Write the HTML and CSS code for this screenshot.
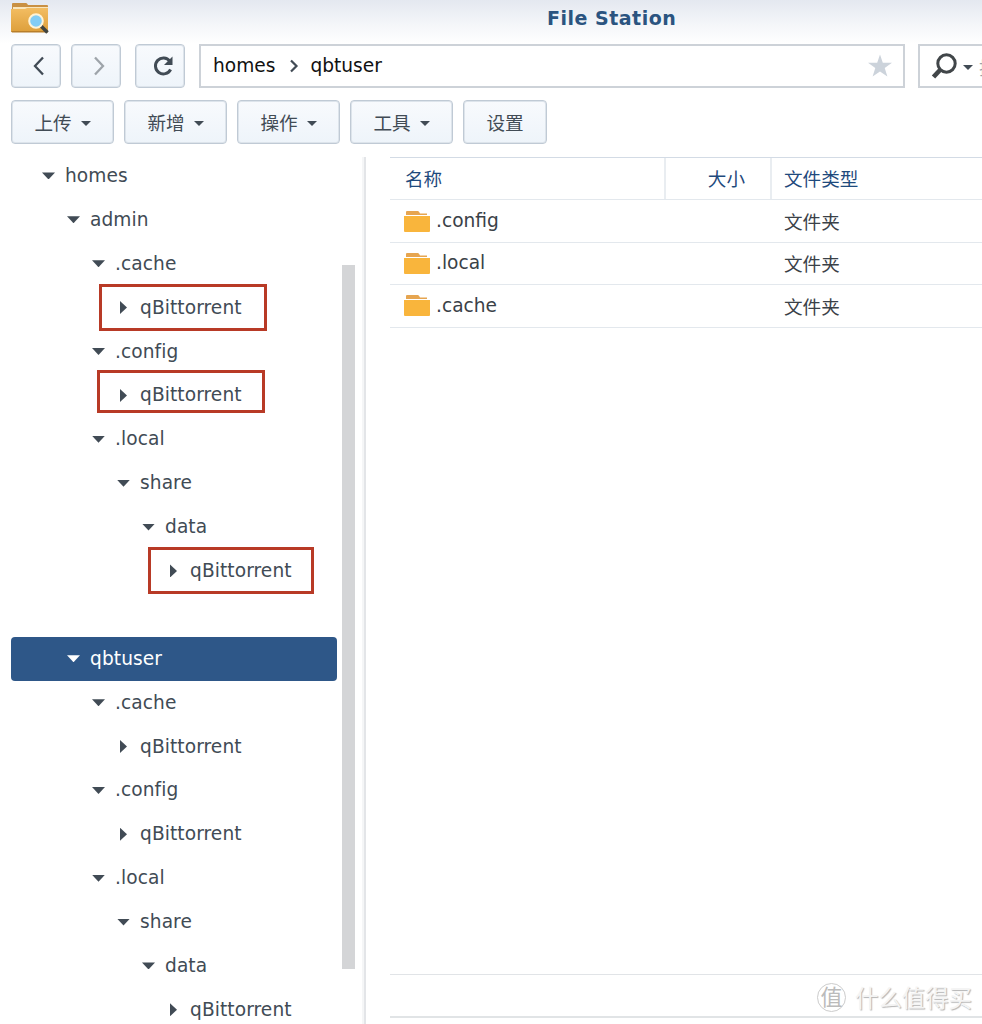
FILE: index.html
```html
<!DOCTYPE html>
<html lang="zh-CN">
<head>
    <meta charset="UTF-8">
    <meta name="viewport" content="width=device-width, initial-scale=1.0">
    <title>File Station</title>
    <link rel="stylesheet" href="styles.css">
</head>
<body>
    <div class="window">
        <header class="titlebar">
            <svg class="app-icon" width="40" height="34" viewBox="0 0 40 34">
                <defs>
                    <linearGradient id="folder" x1="0" y1="0" x2="0" y2="1">
                        <stop offset="0" stop-color="#f3bd62"/>
                        <stop offset="1" stop-color="#dd9f3b"/>
                    </linearGradient>
                </defs>
                <path d="M1 4q0-1 1-1h13q1 0 2 2h19q1 0 1 1v6H1z" fill="#c99043"/>
                <path d="M2 7h35v4H2z" fill="#f9e6bd"/>
                <path d="M0 9h14l2-1h21v23q0 1-1 1H1q-1 0-1-1z" fill="url(#folder)"/>
                <path d="M0 31h37v1.500H1z" fill="#b87e2a"/>
                <path d="M30 26l6.500 6.500" stroke="#3f4441" stroke-width="3.500"/>
                <circle cx="25" cy="21" r="6.800" fill="#83cdf5" stroke="#fff3d6" stroke-width="2"/>
            </svg>
            <h1>File Station</h1>
        </header>

        <nav class="navbar">
            <button class="btn nav-btn" aria-label="后退">
                <svg width="24" height="24" viewBox="0 0 24 24"><path d="M16 3.500L8 12l8 8.500" fill="none" stroke="#414b55" stroke-width="2.300"/></svg>
            </button>
            <button class="btn nav-btn" aria-label="前进">
                <svg width="24" height="24" viewBox="0 0 24 24"><path d="M8 3.500l8 8.500-8 8.500" fill="none" stroke="#9ea4aa" stroke-width="2.300"/></svg>
            </button>
            <button class="btn nav-btn reload" aria-label="刷新">
                <svg width="24" height="24" viewBox="0 0 24 24"><path d="M18.800 7A8 8 0 1 0 19.600 15.500" fill="none" stroke="#414b55" stroke-width="3"/><path d="M21.500 2.500v8.500H13l3-3z" fill="#414b55"/></svg>
            </button>
            <div class="path">
                <span>homes</span>
                <svg class="sep" width="10" height="14" viewBox="0 0 10 14"><path d="M2 1.500L7.500 7 2 12.500" fill="none" stroke="#414b55" stroke-width="2.200"/></svg>
                <span>qbtuser</span>
                <svg class="star" width="24" height="24" viewBox="0 0 24 24"><path d="M12 .500l2.800 8.300H24l-7.300 5.300 2.700 8.400-7.400-5-7.400 5 2.700-8.400L0 8.800h9.200z" fill="#ccd3db"/></svg>
            </div>
            <div class="search">
                <svg width="26" height="26" viewBox="0 0 26 26"><circle cx="15.500" cy="10.500" r="8.700" fill="none" stroke="#414649" stroke-width="3"/><path d="M9 17l-6.500 7" stroke="#414649" stroke-width="4.600"/></svg>
                <i class="caret"></i>
                <span class="placeholder">搜索</span>
            </div>
        </nav>

        <div class="toolbar">
            <button class="btn">上传<i class="caret"></i></button>
            <button class="btn">新增<i class="caret"></i></button>
            <button class="btn">操作<i class="caret"></i></button>
            <button class="btn">工具<i class="caret"></i></button>
            <button class="btn plain">设置</button>
        </div>

        <main class="content">
            <ul class="tree">
                <li class="lv0 open">homes</li>
                <li class="lv1 open">admin</li>
                <li class="lv2 open">.cache</li>
                <li class="lv3">qBittorrent<b class="mark mark-cache"></b></li>
                <li class="lv2 open">.config</li>
                <li class="lv3">qBittorrent<b class="mark mark-config"></b></li>
                <li class="lv2 open">.local</li>
                <li class="lv3 open">share</li>
                <li class="lv4 open">data</li>
                <li class="lv5">qBittorrent<b class="mark mark-data"></b></li>
                <li class="blank"></li>
                <li class="lv1 open selected">qbtuser</li>
                <li class="lv2 open">.cache</li>
                <li class="lv3">qBittorrent</li>
                <li class="lv2 open">.config</li>
                <li class="lv3">qBittorrent</li>
                <li class="lv2 open">.local</li>
                <li class="lv3 open">share</li>
                <li class="lv4 open">data</li>
                <li class="lv5">qBittorrent</li>
            </ul>
            <div class="scrollbar"></div>
            <div class="splitter"></div>

            <section class="files">
                <div class="row head">
                    <div>名称</div>
                    <div class="size">大小</div>
                    <div>文件类型</div>
                </div>
                <div class="row">
                    <div class="name"><svg width="26" height="23" viewBox="0 0 26 23"><path d="M2 5V2q0-1 1-1h11q1 0 2 2.500h7V5z" fill="#e6a550"/><path d="M0 6h26v15q0 1-1 1H1q-1 0-1-1z" fill="#f9b53c"/></svg>.config</div>
                    <div></div>
                    <div>文件夹</div>
                </div>
                <div class="row">
                    <div class="name"><svg width="26" height="23" viewBox="0 0 26 23"><path d="M2 5V2q0-1 1-1h11q1 0 2 2.500h7V5z" fill="#e6a550"/><path d="M0 6h26v15q0 1-1 1H1q-1 0-1-1z" fill="#f9b53c"/></svg>.local</div>
                    <div></div>
                    <div>文件夹</div>
                </div>
                <div class="row">
                    <div class="name"><svg width="26" height="23" viewBox="0 0 26 23"><path d="M2 5V2q0-1 1-1h11q1 0 2 2.500h7V5z" fill="#e6a550"/><path d="M0 6h26v15q0 1-1 1H1q-1 0-1-1z" fill="#f9b53c"/></svg>.cache</div>
                    <div></div>
                    <div>文件夹</div>
                </div>
                <footer class="statusbar"></footer>
            </section>
        </main>

        <div class="watermark"><span class="seal">值</span>什么值得买</div>
    </div>
</body>
</html>
```

FILE: styles.css
```css
* {
    box-sizing: border-box;
}

body {
    margin: 0;
    font-family: "DejaVu Sans", "Noto Sans CJK SC", sans-serif;
    font-size: 18.6px;
    color: #414b55;
    background: #fff;
}

.window {
    position: relative;
    display: flex;
    flex-direction: column;
    width: 982px;
    height: 1024px;
    overflow: hidden;
}

/* title */
.titlebar {
    display: flex;
    height: 44px;
    padding-left: 11px;
    background: linear-gradient(#e4e8f0, #f4f6f9 55%, #fff);
}

.titlebar h1 {
    margin: 0 0 0 496px;
    font-size: 19px;
    line-height: 37px;
    letter-spacing: 0.5px;
    color: #2b5480;
}

/* buttons */
.btn {
    display: flex;
    align-items: center;
    justify-content: center;
    height: 44px;
    padding: 0;
    font-family: inherit;
    font-size: 18.6px;
    color: #414b55;
    background: linear-gradient(#f8fafd, #eef4fa);
    border: 1px solid #c0cad5;
    border-radius: 4px;
    box-shadow: inset 0 0 0 1px #dde4eb;
}

.caret {
    width: 0;
    height: 0;
    border: 5px solid transparent;
    border-top-color: #414b55;
    border-bottom-width: 0;
}

.navbar {
    display: flex;
    height: 44px;
    padding-left: 11px;
}

.nav-btn {
    width: 50px;
    margin-right: 10px;
}

.nav-btn svg {
    margin-left: 5px;
}

.reload {
    margin-left: 4px;
    margin-right: 14px;
}

.path {
    display: flex;
    align-items: center;
    width: 706px;
    padding: 0 11px 2px 12px;
    color: #111;
    border: 2px solid #cdd2d8;
}

.sep {
    margin: 2px 11px 0 14px;
}

.star {
    margin: 2px 0 0 auto;
}

.search {
    display: flex;
    flex: 1;
    align-items: center;
    margin-left: 13px;
    padding-left: 11px;
    overflow: hidden;
    border: 2px solid #cdd2d8;
    border-right: 0;
}

.search svg {
    flex: none;
}

.search .caret {
    flex: none;
    margin: 2px 6px 0 6px;
}

.placeholder {
    flex: none;
    color: #9ba3ab;
}

.toolbar {
    display: flex;
    gap: 10px;
    padding: 12px 0 0 11px;
}

.toolbar .btn {
    width: 103px;
    padding-bottom: 1px;
}

.toolbar .plain {
    width: 84px;
}

.toolbar .caret {
    margin: 4px 0 0 9px;
}

/* folder tree */
.content {
    display: flex;
    flex: 1;
    min-height: 0;
    padding-top: 9px;
}

.tree {
    width: 326px;
    margin: 1px 0 0 11px;
    padding: 0;
    list-style: none;
}

.tree li {
    position: relative;
    display: flex;
    align-items: center;
    height: 43.9px;
    padding-bottom: 1px;
    letter-spacing: 0.08px;
    border-radius: 4px;
}

.tree li::before {
    content: "";
    flex: none;
    width: 7px;
    height: 13px;
    margin: 1px 13px 0 3px;
    background: #414b55;
    clip-path: polygon(0 0, 100% 50%, 0 100%);
}

.tree .open::before {
    width: 13px;
    height: 7px;
    margin: 1px 10px 0 0;
    clip-path: polygon(0 0, 100% 0, 50% 100%);
}

.tree .blank::before {
    display: none;
}

.tree .lv0 { padding-left: 31px; }
.tree .lv1 { padding-left: 56px; }
.tree .lv2 { padding-left: 81px; }
.tree .lv3 { padding-left: 106px; }
.tree .lv4 { padding-left: 131px; }
.tree .lv5 { padding-left: 156px; }

.tree .selected {
    color: #fff;
    background: #2e5788;
}

.tree .selected::before {
    background: #fff;
}

/* red frames over the folders */
.mark {
    position: absolute;
    border: 3px solid #b83a26;
}

.mark-cache {
    left: 88px;
    top: -2px;
    width: 168px;
    height: 47px;
}

.mark-config {
    left: 86px;
    top: -3px;
    width: 168px;
    height: 43px;
}

.mark-data {
    left: 137px;
    top: -2px;
    width: 166px;
    height: 47px;
}

.scrollbar {
    width: 13px;
    height: 704px;
    margin: 112px 0 0 5px;
    background: #d4d5d7;
}

.splitter {
    width: 4px;
    margin: 4px 0 0 7px;
    background: #f5f6f7;
    border-right: 2px solid #e3e5e8;
}

/* file list */
.files {
    display: flex;
    flex: 1;
    flex-direction: column;
    margin: 4px 0 0 24px;
    border-top: 1px solid #d3dbe5;
}

.row {
    display: grid;
    grid-template-columns: 276px 106px 1fr;
    height: 42.4px;
    border-bottom: 1px solid #e3e8ed;
}

.row > div {
    display: flex;
    align-items: center;
    padding: 0 0 1px 12px;
    color: #3a4147;
}

.row > .name {
    padding: 0 0 1px 14px;
}

.name svg {
    margin: 1px 6px 0 0;
}

.head > div {
    padding-bottom: 3px;
    color: #1f4a7d;
    border-right: 2px solid #e9edf1;
}

.head > div:first-child {
    padding-left: 15px;
}

.head > div:last-child {
    border-right: 0;
}

.head > .size {
    justify-content: flex-end;
    padding-right: 25px;
}

.statusbar {
    height: 44px;
    margin-top: auto;
    margin-bottom: 6px;
    border-top: 1px solid #e1e4e7;
    border-bottom: 2px solid #e1e4e6;
}

.watermark {
    position: absolute;
    right: 10px;
    bottom: 10px;
    display: flex;
    align-items: center;
    gap: 9px;
    height: 34px;
    font-size: 23.4px;
    color: #f4f4f4;
    text-shadow: 1px 1px 1px #b4b4b4;
}

.seal {
    width: 29px;
    height: 29px;
    font-size: 22px;
    line-height: 27px;
    text-align: center;
    color: #bbb;
    text-shadow: none;
    border: 1px solid #ccc;
    border-radius: 50%;
}
```
